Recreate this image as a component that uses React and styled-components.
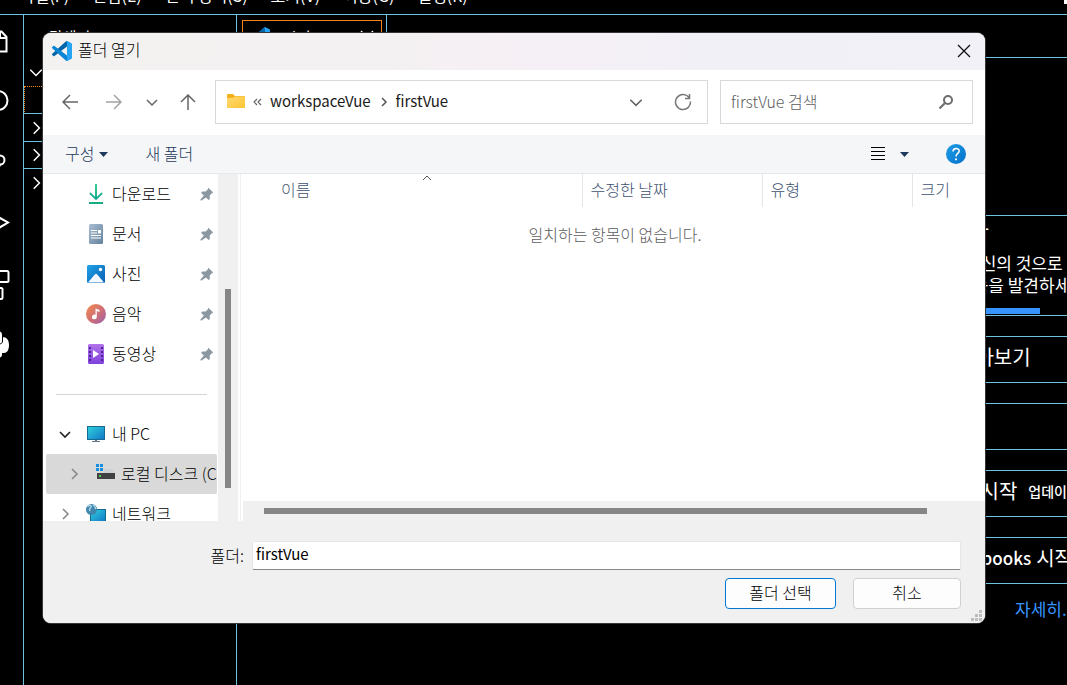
import React from "react";
import styled, { createGlobalStyle, css } from "styled-components";

const LINE = "#6fc3df";
const ORANGE = "#f38518";

const GlobalStyle = createGlobalStyle`
  *, *::before, *::after { box-sizing: border-box; }
  body {
    margin: 0;
    background: #000;
    overflow: hidden;
    font-family: "Noto Sans CJK KR", "Noto Sans", sans-serif;
    font-size: 16px;
    font-weight: 300;
    line-height: 24px;
  }
  button, input, th { font: inherit; color: inherit; }
  button { margin: 0; padding: 0; border: 0; background: none; }
  ul { margin: 0; padding: 0; list-style: none; }
  svg { display: block; flex: none; }
`;

/* ---------- editor behind the dialog ---------- */

const Workbench = styled.div`
  position: relative;
  display: flex;
  flex-direction: column;
  height: 100vh;
  overflow: hidden;
  background: #000;
  color: #fff;
`;

const MenuBar = styled.nav`
  display: flex;
  align-items: flex-end;
  justify-content: space-between;
  height: 15px;
  padding-bottom: 9px;
  padding-left: 20px;
  border-bottom: 1px solid ${LINE};
  overflow: hidden;
`;

const Menus = styled.div`
  display: flex;
  gap: 23px;
  font-weight: 400;
`;

const MenuButton = styled.button`
  white-space: nowrap;
  line-height: 20px;
`;

const LayoutButton = styled.button`
  padding-bottom: 1px;
`;

const Body = styled.div`
  display: flex;
  flex: 1;
  min-height: 0;
`;

const ActivityBar = styled.nav`
  flex: none;
  width: 24px;
  border-right: 1px solid ${LINE};
`;

const Activity = styled.button`
  display: block;
  width: 23px;
  height: 60px;
`;

const SideBar = styled.aside`
  flex: none;
  width: 213px;
  border-right: 1px solid ${LINE};
`;

const SideTitle = styled.h2`
  height: 42px;
  margin: 0;
  padding-left: 25px;
  font-size: 15px;
  font-weight: 400;
  line-height: 44px;
`;

const Section = styled.button`
  display: flex;
  align-items: center;
  width: 100%;
  height: ${(p) => p.$height || 27}px;
  padding-left: 4px;
  border-bottom: ${(p) => (p.$line ? `1px solid ${LINE}` : "0")};
`;

const FocusRow = styled.div`
  height: 28px;
  border: 1px dotted ${ORANGE};
  border-bottom: 1px solid ${LINE};
`;

const Editor = styled.main`
  flex: 1;
  min-width: 0;
  overflow: hidden;
`;

const TabBar = styled.div`
  display: flex;
  height: 43px;
  border-bottom: 1px solid ${LINE};
`;

const TabSlot = styled.div`
  width: 150px;
  padding: 5px 4px 0 5px;
  border-right: 1px solid ${LINE};
`;

const Tab = styled.button`
  display: flex;
  align-items: center;
  gap: 12px;
  width: 140px;
  height: 33px;
  padding: 0 7px;
  border: 1px solid ${ORANGE};
  span { flex: 1; text-align: left; font-weight: 400; }
`;

const Walkthroughs = styled.section`
  display: flex;
  flex-direction: column;
  gap: 20px;
  margin-left: 663px;
  padding-top: 157px;
`;

const Card = styled.article`
  display: flex;
  flex-direction: column;
  justify-content: center;
  height: ${(p) => p.$height || 47}px;
  padding-bottom: ${(p) => (p.$height ? 0 : 5)}px;
  border: 1px solid ${LINE};
  border-right: 0;
  overflow: hidden;
`;

const CardLine = styled.div`
  display: flex;
  align-items: center;
  gap: 11px;
  padding-left: ${(p) => p.$inset}px;
  font-size: ${(p) => (p.$big ? 20 : 17)}px;
  font-weight: 400;
  line-height: 22px;
  white-space: nowrap;
  b { margin-right: -6px; font-size: 17px; font-weight: 500; }
  small { font-size: 14px; font-weight: 500; }
`;

const CardTitle = styled.h3`
  margin: 0 0 4px;
  padding-left: 51px;
  font-size: 20px;
  font-weight: 400;
  line-height: 30px;
`;

const Progress = styled.div`
  width: 139px;
  height: 6px;
  margin-top: 12px;
  background: #3794ff;
`;

const MoreLink = styled.a`
  align-self: flex-start;
  margin-top: -7px;
  margin-left: 115px;
  font-size: 17px;
  font-weight: 400;
  line-height: 24px;
  color: #3794ff;
  text-decoration: none;
  white-space: nowrap;
`;

/* ---------- dialog ---------- */

const Dialog = styled.section`
  position: absolute;
  top: 33px;
  left: 43px;
  right: 82px;
  border-radius: 8px;
  background: #fff;
  color: #000;
  overflow: hidden;
  box-shadow: 0 0 0 1px #363636;
`;

const TitleBar = styled.header`
  display: flex;
  align-items: center;
  gap: 6px;
  height: 37px;
  padding: 0 14px 2px 9px;
  background: linear-gradient(100deg, #f3f2f1 0%, #f3f1f1 35%, #f6f0f5 48%, #f2f0f7 70%, #f2f1f7 100%);
  h1 {
    flex: 1;
    margin: 0;
    padding-bottom: 3px;
    font-size: 16px;
    font-weight: 300;
  }
`;

const NavBar = styled.div`
  display: flex;
  align-items: center;
  height: 65px;
  padding: 0 12px 2px;
`;

const History = styled.div`
  display: grid;
  grid-template-columns: 30px 58px 18px 54px;
  flex: none;
`;

const IconButton = styled.button`
  display: flex;
  align-items: center;
  justify-content: center;
  height: 32px;
`;

const AddressBar = styled.div`
  display: flex;
  align-items: center;
  flex: 1;
  min-width: 0;
  height: 44px;
  margin-right: 12px;
  padding: 0 15px 0 10px;
  border: 1px solid #d9d9d9;
`;

const Crumbs = styled.div`
  display: flex;
  align-items: center;
  flex: 1;
  gap: 8px;
  padding-left: 7px;
  font-size: 15px;
  font-weight: 400;
  color: #1b1b1b;
  button { padding-bottom: 2px; }
`;

const AddressActions = styled.div`
  display: flex;
  gap: 30px;
`;

const SearchBox = styled.label`
  display: flex;
  align-items: center;
  flex: none;
  width: 253px;
  height: 44px;
  padding: 0 17px 0 10px;
  border: 1px solid #d9d9d9;
  input {
    flex: 1;
    min-width: 0;
    padding: 0 0 2px;
    border: 0;
    outline: 0;
    background: none;
  }
  input::placeholder { color: #5d5d5d; opacity: 1; }
`;

const CommandBar = styled.div`
  display: flex;
  align-items: center;
  justify-content: space-between;
  height: 39px;
  padding: 0 19px 0 22px;
  border-bottom: 1px solid #e8e8e8;
  background: #f5f6f8;
  color: #1e395b;
`;

const CommandGroup = styled.div`
  display: flex;
  align-items: center;
  gap: 37px;
`;

const Command = styled.button`
  display: flex;
  align-items: center;
  gap: 5px;
  span { padding-bottom: 2px; }
`;

const ViewButton = styled.button`
  display: flex;
  align-items: center;
  gap: 14px;
`;

const Panes = styled.div`
  display: flex;
  height: 347px;
`;

const TreePane = styled.nav`
  display: flex;
  flex: none;
  width: 198px;
  border-right: 1px solid #f0f0f0;
  overflow: hidden;
`;

const Tree = styled.ul`
  flex: none;
  width: 175px;
  padding: 0 1px 0 3px;
`;

const TreeItem = styled.button`
  display: flex;
  align-items: center;
  width: 100%;
  height: 40px;
  padding-right: ${(p) => (p.$pinned ? 3 : 0)}px;
  padding-left: ${(p) => (p.$nested ? 19 : 10)}px;
  border-radius: 2px;
  overflow: hidden;
  ${(p) => p.$selected && css`background: #d9d9d9;`}
`;

const Twisty = styled.span`
  display: flex;
  align-items: center;
  justify-content: center;
  flex: none;
  width: 18px;
`;

const TreeIcon = styled.span`
  flex: none;
  width: 20px;
  margin: 0 6px 0 12px;
`;

const TreeLabel = styled.span`
  flex: 1;
  padding-bottom: 2px;
  text-align: left;
  white-space: nowrap;
`;

const TreeDivider = styled.li`
  height: 40px;
  padding: 20px 10px 0;
  &::before {
    content: "";
    display: block;
    height: 1px;
    background: #d5d5d5;
  }
`;

const VScroll = styled.div`
  flex: none;
  width: 20px;
  padding: 115px 7px 33px;
  background: #f0f0f0;
  &::before {
    content: "";
    display: block;
    height: 100%;
    background: #868686;
  }
`;

const FilePane = styled.div`
  display: flex;
  flex-direction: column;
  justify-content: space-between;
  flex: 1;
  min-width: 0;
`;

const FileTable = styled.table`
  width: 100%;
  table-layout: fixed;
  border-collapse: collapse;
  thead tr { height: 33px; }
  td {
    height: 56px;
    padding: 0 0 2px 4px;
    text-align: center;
    color: #5d5d5d;
  }
`;

const Column = styled.th`
  position: relative;
  width: ${(p) => (p.$width ? `${p.$width}px` : "auto")};
  padding: 0 0 3px ${(p) => (p.$first ? 40 : 8)}px;
  border-right: ${(p) => (p.$last ? "0" : "1px solid #e5e5e5")};
  text-align: left;
  font-weight: 300;
  color: #3d5270;
`;

const SortMark = styled.span`
  position: absolute;
  top: 1px;
  left: calc(50% + 11px);
`;

const HScroll = styled.div`
  height: 20px;
  margin-left: 2px;
  padding: 7px 58px 7px 21px;
  background: #f0f0f0;
  &::before {
    content: "";
    display: block;
    height: 6px;
    background: #868686;
  }
`;

const Footer = styled.footer`
  position: relative;
  padding: 20px 24px 14px 0;
  background: #f0f0f0;
`;

const FieldRow = styled.div`
  display: flex;
  align-items: center;
  gap: 8px;
  label {
    flex: none;
    width: 201px;
    padding-bottom: 2px;
    text-align: right;
  }
  input {
    flex: 1;
    min-width: 0;
    height: 29px;
    padding: 0 3px 4px;
    border: 1px solid #e6e6e6;
    border-bottom-color: #868686;
    border-radius: 2px;
    outline: 0;
    background: #fff;
    font-size: 15px;
    font-weight: 400;
  }
`;

const Buttons = styled.div`
  display: flex;
  justify-content: flex-end;
  gap: 17px;
  margin-top: 8px;
`;

const PushButton = styled.button`
  width: ${(p) => (p.$primary ? 111 : 108)}px;
  height: 31px;
  padding-bottom: 4px;
  border: 1px solid ${(p) => (p.$primary ? "#0078d4" : "#d0d0d0")};
  border-radius: 4px;
  background: #fdfdfd;
`;

const Grip = styled.span`
  position: absolute;
  right: 3px;
  bottom: 2px;
`;

/* ---------- drawings ---------- */

const Svg = ({ w, h, children, ...rest }) => (
  <svg width={w} height={h} viewBox={`0 0 ${w} ${h}`} fill="none" aria-hidden="true" {...rest}>
    {children}
  </svg>
);

const CodeLogo = () => (
  <svg width="20" height="20" viewBox="0 0 100 100" aria-hidden="true">
    <path fill="#0065a9" d="M96.5 10.8 75.9.9a6.2 6.2 0 0 0-7.1 1.2L1.3 63.7a4.2 4.2 0 0 0 0 6.2l5.5 5a4.2 4.2 0 0 0 5.4.2L93.4 13.5c2.7-2.1 6.6-.1 6.6 3.3v-.4a6.3 6.3 0 0 0-3.5-5.6z" />
    <path fill="#0a84d4" d="m96.5 89.2-20.6 9.9a6.2 6.2 0 0 1-7.1-1.2L1.3 36.3a4.2 4.2 0 0 1 0-6.2l5.5-5a4.2 4.2 0 0 1 5.4-.2l81.2 61.6c2.7 2.1 6.6.1 6.6-3.3v.4a6.3 6.3 0 0 1-3.5 5.6z" />
    <path fill="#24a4f2" d="M75.9 99.1a6.2 6.2 0 0 1-7.1-1.2c2.3 2.3 6.2.7 6.2-2.6V4.7c0-3.3-3.9-4.9-6.2-2.6a6.2 6.2 0 0 1 7.1-1.2l20.6 9.9a6.3 6.3 0 0 1 3.5 5.6v67.2a6.3 6.3 0 0 1-3.5 5.6z" />
  </svg>
);

const Chevron = ({ dir = "right", color = "#8a8a8a", width = 2, size = 14 }) => {
  const d = {
    right: "M5 2l5 5-5 5",
    down: "M2 5l5 5 5-5",
  }[dir];
  return (
    <svg width={size} height={size} viewBox="0 0 14 14" fill="none" aria-hidden="true">
      <path d={d} stroke={color} strokeWidth={width} />
    </svg>
  );
};

const Cross = ({ color = "#111", size = 14 }) => (
  <svg width={size} height={size} viewBox="0 0 14 14" aria-hidden="true">
    <path d="M1 1l12 12M13 1L1 13" stroke={color} strokeWidth="1.3" />
  </svg>
);

const Pin = () => (
  <Svg w={14} h={14}>
    <path d="M8.2.8l5 4.8-1.4.6-2.1 2.4.1 3.4-1.1 1.1-2.8-2.5L1.6 13.4.5 13.4.6 12.3 3.9 8.6 1.1 5.9l1.2-1.4 3.5.1 2-2.4z" fill="#8b989f" />
  </Svg>
);

const activityIcons = {
  탐색기: <path d="M-8 16.500H1.500L6.500 22V36.500H-8M0 16.500V23H6.500" />,
  검색: <circle cx="-2" cy="25.500" r="9.500" />,
  "소스 제어": <g><circle cx="0" cy="25" r="4.500" /><path d="M0 30c-1 3-3 4-8 4" /></g>,
  "실행 및 디버그": <path d="M-8 18.500L8 27.500-8 37" />,
  확장: <g><rect x="-5" y="16" width="13.500" height="11" rx="1.500" /><rect x="-8" y="33" width="10.500" height="11" rx="1.500" /></g>,
  테스트: (
    <g stroke="none">
      <path fill="#fff" d="M-4 16c4 0 6 1 6 4v2c5 0 7 3 7 8s-2 8-5 8H2v2c0 2-2 3-6 3z" />
      <path stroke="#000" strokeWidth="1" d="M2.500 21v5c0 2-1 3-4 3" />
    </g>
  ),
};

const Activities = () =>
  Object.entries(activityIcons).map(([name, art]) => (
    <Activity key={name} aria-label={name}>
      <Svg w={23} h={60} stroke="#fff" strokeWidth="2">{art}</Svg>
    </Activity>
  ));

const placeIcons = {
  download: (
    <Svg w={20} h={20}>
      <defs><linearGradient id="dl" x1="0" y1="0" x2="0" y2="1"><stop stopColor="#3ccf8e" /><stop offset="1" stopColor="#0ea58e" /></linearGradient></defs>
      <path d="M9 0h2v12.800l4.500-4.500 1.300 1.400L10 16.200 3.200 9.700l1.300-1.400L9 12.800z" fill="url(#dl)" />
      <rect x="3" y="18" width="14" height="2" fill="#16ad82" />
    </Svg>
  ),
  documents: (
    <Svg w={20} h={20}>
      <defs><linearGradient id="doc" x1="0" y1="0" x2="1" y2="1"><stop stopColor="#a9bed2" /><stop offset="1" stopColor="#65829e" /></linearGradient></defs>
      <rect x="3" width="14" height="20" rx="1.500" fill="url(#doc)" />
      <path d="M5 6.500h6M5 9h6M5 11.500h10M5 14h10" stroke="#fff" strokeWidth="1.200" />
      <rect x="12" y="6" width="3" height="3.500" fill="#fff" />
    </Svg>
  ),
  pictures: (
    <Svg w={20} h={20}>
      <defs><linearGradient id="pic" x1="0" y1="0" x2="1" y2="1"><stop stopColor="#1fa2e6" /><stop offset="1" stopColor="#0a60b4" /></linearGradient></defs>
      <rect x="1" y="1" width="18" height="18" rx="1.500" fill="url(#pic)" />
      <path d="M2 18.500l7-8.300q1-1 2 0l7 8.300z" fill="#f4faff" />
      <circle cx="14.500" cy="5.500" r="1.700" fill="#fff" />
    </Svg>
  ),
  music: (
    <Svg w={20} h={20}>
      <defs><linearGradient id="mus" x1="0" y1="0" x2="1" y2="1"><stop stopColor="#f28b4c" /><stop offset=".55" stopColor="#cf6f76" /><stop offset="1" stopColor="#9661b0" /></linearGradient></defs>
      <circle cx="10" cy="10" r="10" fill="url(#mus)" />
      <path d="M9.500 4.500l4 1.500v2l-2.700-.9v5.700a2.400 2.400 0 1 1-1.300-2z" fill="#fff" />
    </Svg>
  ),
  videos: (
    <Svg w={20} h={20}>
      <defs><linearGradient id="vid" x1="0" y1="0" x2="0" y2="1"><stop stopColor="#b273ec" /><stop offset="1" stopColor="#8041dd" /></linearGradient></defs>
      <rect x="2" width="16" height="20" rx="1.500" fill="url(#vid)" />
      <path d="M4 3v15M16 3v15" stroke="#4b2793" strokeWidth="2" strokeDasharray="2 2" />
      <path d="M7 6l6 4-6 4z" fill="#fff" />
    </Svg>
  ),
  pc: (
    <Svg w={20} h={20}>
      <defs><linearGradient id="pc" x1="0" y1="0" x2="1" y2="1"><stop stopColor="#31d2de" /><stop offset="1" stopColor="#1177c6" /></linearGradient></defs>
      <rect x="1.500" y="2.500" width="17" height="13" fill="url(#pc)" stroke="#176b91" />
      <path d="M9 16h2v1h3v1H6v-1h3z" fill="#66737e" />
    </Svg>
  ),
  disk: (
    <Svg w={20} h={20}>
      <path d="M1 0h3v3H1zM5 0h3v3H5zM1 4h3v3H1zM5 4h3v3H5z" fill="#1590df" />
      <path d="M9 5h8l3 4H9z" fill="#cfd2d4" />
      <rect x="2" y="9" width="18" height="6" fill="#3f4143" />
      <rect x="4" y="11" width="2" height="2" fill="#42d34b" />
    </Svg>
  ),
  network: (
    <Svg w={20} h={20}>
      <defs><linearGradient id="net" x1="0" y1="0" x2="1" y2="1"><stop stopColor="#31d2de" /><stop offset="1" stopColor="#1177c6" /></linearGradient></defs>
      <rect x="4.500" y="5.500" width="15" height="12" fill="url(#net)" stroke="#176b91" />
      <circle cx="5.500" cy="5.500" r="5.500" fill="#3f86ad" />
      <path d="M1.500 3C3 .5 6 1 5 3S2.500 5 4 7M7 1c2 1 3 3 2 4" stroke="#b9dcea" strokeWidth="1.300" />
    </Svg>
  ),
};

const Place = ({ icon, label, pinned, open, expandable, nested, selected }) => (
  <li>
    <TreeItem $nested={nested} $selected={selected} $pinned={pinned}>
      <Twisty>
        {expandable && <Chevron dir={open ? "down" : "right"} color={open ? "#222" : "#8a8a8a"} width={1.6} />}
      </Twisty>
      <TreeIcon>{placeIcons[icon]}</TreeIcon>
      <TreeLabel>{label}</TreeLabel>
      {pinned && <Pin />}
    </TreeItem>
  </li>
);

const Caret = () => (
  <Svg w={9} h={5}><path d="M0 0h9L4.500 5z" fill="#1e395b" /></Svg>
);

const menus = ["파일(F)", "편집(E)", "선택 영역(S)", "보기(V)", "이동(G)", "실행(R)"];

export default function App() {
  return (
    <>
      <GlobalStyle />
      <Workbench>
        <MenuBar>
          <Menus>{menus.map((m) => <MenuButton key={m}>{m}</MenuButton>)}</Menus>
          <LayoutButton aria-label="레이아웃">
            <Svg w={4} h={14}><path d="M1 0h3v14H1z" fill="#fff" /></Svg>
          </LayoutButton>
        </MenuBar>
        <Body>
          <ActivityBar><Activities /></ActivityBar>
          <SideBar>
            <SideTitle>탐색기</SideTitle>
            <Section $height={29} aria-label="열린 편집기"><Chevron dir="down" color="#fff" width={1.3} size={16} /></Section>
            <FocusRow />
            <Section $line $height={28} aria-label="폴더"><Chevron color="#fff" width={1.3} size={16} /></Section>
            <Section $line aria-label="개요"><Chevron color="#fff" width={1.3} size={16} /></Section>
            <Section aria-label="타임라인"><Chevron color="#fff" width={1.3} size={16} /></Section>
          </SideBar>
          <Editor>
            <TabBar>
              <TabSlot>
                <Tab><CodeLogo /><span>시작</span><Cross color="#fff" /></Tab>
              </TabSlot>
            </TabBar>
            <Walkthroughs>
              <Card $height={101}>
                <CardTitle>시작</CardTitle>
                <CardLine $inset={64}>당신의 것으로 만들기</CardLine>
                <CardLine $inset={56}>기능을 발견하세요</CardLine>
                <Progress />
              </Card>
              <Card><CardLine $big $inset={56}>알아보기</CardLine></Card>
              <Card />
              <Card><CardLine $big $inset={41}>Vue 시작 <small>업데이트됨</small></CardLine></Card>
              <Card><CardLine $big $inset={42}><b>Notebooks</b> 시작</CardLine></Card>
              <MoreLink href="#more">자세히...</MoreLink>
            </Walkthroughs>
          </Editor>
        </Body>

        <Dialog role="dialog" aria-label="폴더 열기">
          <TitleBar>
            <CodeLogo />
            <h1>폴더 열기</h1>
            <button aria-label="닫기"><Cross /></button>
          </TitleBar>

          <NavBar>
            <History>
              <IconButton aria-label="뒤로"><Svg w={16} h={16} stroke="#666" strokeWidth="1.500"><path d="M16 8H1M8 1L1 8l7 7" /></Svg></IconButton>
              <IconButton aria-label="앞으로"><Svg w={16} h={16} stroke="#a3a3a3" strokeWidth="1.500"><path d="M0 8h15M8 1l7 7-7 7" /></Svg></IconButton>
              <IconButton aria-label="최근 위치"><Chevron dir="down" color="#666" width={1.5} /></IconButton>
              <IconButton aria-label="위로"><Svg w={16} h={16} stroke="#666" strokeWidth="1.500"><path d="M8 16V1M1 8l7-7 7 7" /></Svg></IconButton>
            </History>
            <AddressBar>
              <Svg w={20} h={16}>
                <defs><linearGradient id="fd" x1="0" y1="0" x2="1" y2="1"><stop stopColor="#ffd970" /><stop offset="1" stopColor="#fcc433" /></linearGradient></defs>
                <path d="M1 1q0-1 1-1h5l2 2h9q1 0 1 1v3H1z" fill="#f4b01e" />
                <path d="M1 4h6l2-1.500h10V14H1z" fill="url(#fd)" />
              </Svg>
              <Crumbs>
                <Svg w={9} h={8} stroke="#666" strokeWidth="1.200"><path d="M4 1L1 4l3 3M8 1L5 4l3 3" /></Svg>
                <button>workspaceVue</button>
                <Svg w={9} h={10} stroke="#555" strokeWidth="1.500"><path d="M3 1l4 4-4 4" /></Svg>
                <button>firstVue</button>
              </Crumbs>
              <AddressActions>
                <IconButton aria-label="이전 위치"><Chevron dir="down" color="#666" width={1.4} size={16} /></IconButton>
                <IconButton aria-label="새로 고침">
                  <Svg w={18} h={18} stroke="#777" strokeWidth="1.500"><path d="M16.500 8.500A7.500 7.500 0 1 1 13.500 3L15.500 5M15.500 1v4.500H11" /></Svg>
                </IconButton>
              </AddressActions>
            </AddressBar>
            <SearchBox>
              <input type="text" placeholder="firstVue 검색" aria-label="firstVue 검색" />
              <Svg w={18} h={16} stroke="#6d6d6d"><circle cx="11" cy="6" r="4" strokeWidth="2" /><path d="M8 9l-5.500 5.500" strokeWidth="2.200" /></Svg>
            </SearchBox>
          </NavBar>

          <CommandBar>
            <CommandGroup>
              <Command><span>구성</span><Caret /></Command>
              <Command><span>새 폴더</span></Command>
            </CommandGroup>
            <CommandGroup>
              <ViewButton aria-label="보기 변경">
                <Svg w={16} h={14} stroke="#000" strokeWidth="1"><path d="M1 .5h14M1 4.500h14M1 8.500h14M1 12.500h14" /></Svg>
                <Caret />
              </ViewButton>
              <button aria-label="도움말">
                <Svg w={20} h={20}>
                  <defs><linearGradient id="hp" x1="0" y1="0" x2="1" y2="1"><stop stopColor="#1f9de6" /><stop offset="1" stopColor="#0370cb" /></linearGradient></defs>
                  <circle cx="10" cy="10" r="10" fill="url(#hp)" />
                  <path d="M7 7.500c0-4 6.200-4 6.200-.5 0 2.500-3.200 2.300-3.200 5.500" stroke="#fff" strokeWidth="1.500" />
                  <circle cx="10" cy="15.300" r="1.100" fill="#fff" />
                </Svg>
              </button>
            </CommandGroup>
          </CommandBar>

          <Panes>
            <TreePane aria-label="탐색 창">
              <Tree>
                <Place icon="download" label="다운로드" pinned />
                <Place icon="documents" label="문서" pinned />
                <Place icon="pictures" label="사진" pinned />
                <Place icon="music" label="음악" pinned />
                <Place icon="videos" label="동영상" pinned />
                <TreeDivider />
                <Place icon="pc" label="내 PC" expandable open />
                <Place icon="disk" label="로컬 디스크 (C:)" expandable nested selected />
                <Place icon="network" label="네트워크" expandable />
              </Tree>
              <VScroll />
            </TreePane>
            <FilePane>
              <FileTable>
                <thead>
                  <tr>
                    <Column $first $width={341}>이름<SortMark><Svg w={10} h={6} stroke="#555"><path d="M1 5l4-4 4 4" /></Svg></SortMark></Column>
                    <Column $width={180}>수정한 날짜</Column>
                    <Column $width={150}>유형</Column>
                    <Column $last>크기</Column>
                  </tr>
                </thead>
                <tbody>
                  <tr><td colSpan={4}>일치하는 항목이 없습니다.</td></tr>
                </tbody>
              </FileTable>
              <HScroll />
            </FilePane>
          </Panes>

          <Footer>
            <FieldRow>
              <label htmlFor="folder-name">폴더:</label>
              <input id="folder-name" type="text" defaultValue="firstVue" />
            </FieldRow>
            <Buttons>
              <PushButton $primary>폴더 선택</PushButton>
              <PushButton>취소</PushButton>
            </Buttons>
            <Grip>
              <Svg w={11} h={11}><path d="M8 0h3v3H8zM4 4h3v3H4zM8 4h3v3H8zM0 8h3v3H0zM4 8h3v3H4zM8 8h3v3H8z" fill="#bdbdbd" /></Svg>
            </Grip>
          </Footer>
        </Dialog>
      </Workbench>
    </>
  );
}
